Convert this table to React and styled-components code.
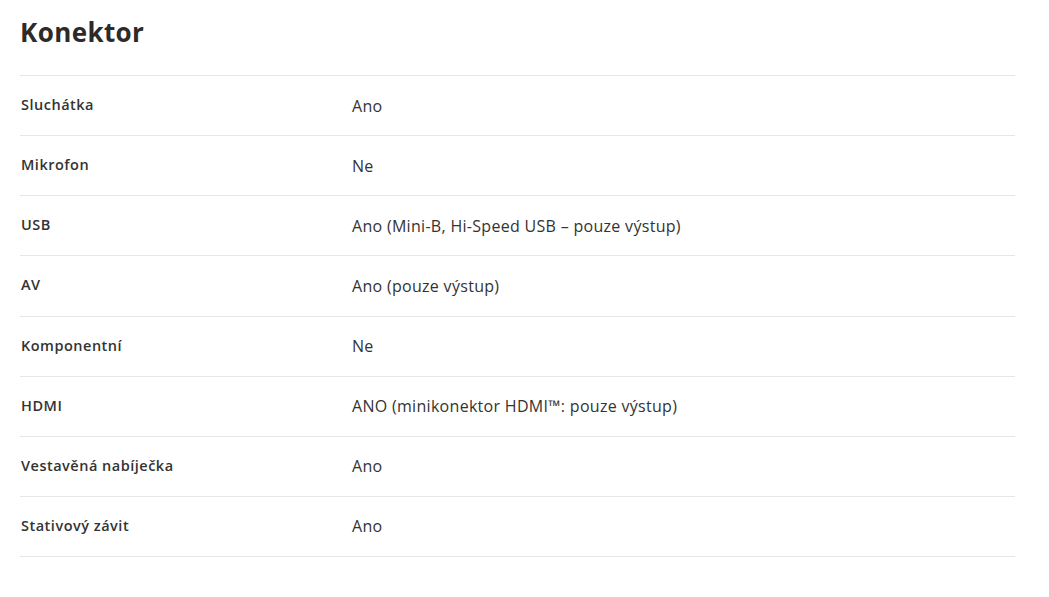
import React from "react";
import styled, { createGlobalStyle } from "styled-components";

const Global = createGlobalStyle`
  html, body { margin: 0; padding: 0; background: #fff; }
  body { font-family: "Open Sans", "Noto Sans", sans-serif; color: #333; }
`;

const Page = styled.div`
  padding: 0 34px 0 20px;
`;

const Title = styled.h2`
  margin: 0;
  height: 76px;
  box-sizing: border-box;
  padding-top: 15px;
  font-size: 26px;
  line-height: 34px;
  font-weight: 700;
  letter-spacing: 0.4px;
  color: #2d2a28;
  border-bottom: 1px solid #e6e6e6;
`;

const Row = styled.div`
  display: grid;
  grid-template-columns: 332px 1fr;
  height: 60.125px;
  box-sizing: border-box;
  border-bottom: 1px solid #e6e6e6;
  align-items: center;
`;

const Label = styled.div`
  font-size: 14.5px;
  font-weight: 600;
  letter-spacing: 0.5px;
  color: #333;
  margin-top: -2px;
  padding-left: 1px;
`;

const Value = styled.div`
  font-size: 16px;
  font-weight: 400;
  color: #333;
  letter-spacing: 0.3px;
`;

const rows = [
  ["Sluchátka", "Ano"],
  ["Mikrofon", "Ne"],
  ["USB", "Ano (Mini-B, Hi-Speed USB – pouze výstup)"],
  ["AV", "Ano (pouze výstup)"],
  ["Komponentní", "Ne"],
  ["HDMI", "ANO (minikonektor HDMI™: pouze výstup)"],
  ["Vestavěná nabíječka", "Ano"],
  ["Stativový závit", "Ano"],
];

export default function App() {
  return (
    <>
      <Global />
      <Page>
        <Title>Konektor</Title>
        {rows.map(([l, v]) => (
          <Row key={l}>
            <Label>{l}</Label>
            <Value>{v}</Value>
          </Row>
        ))}
      </Page>
    </>
  );
}
